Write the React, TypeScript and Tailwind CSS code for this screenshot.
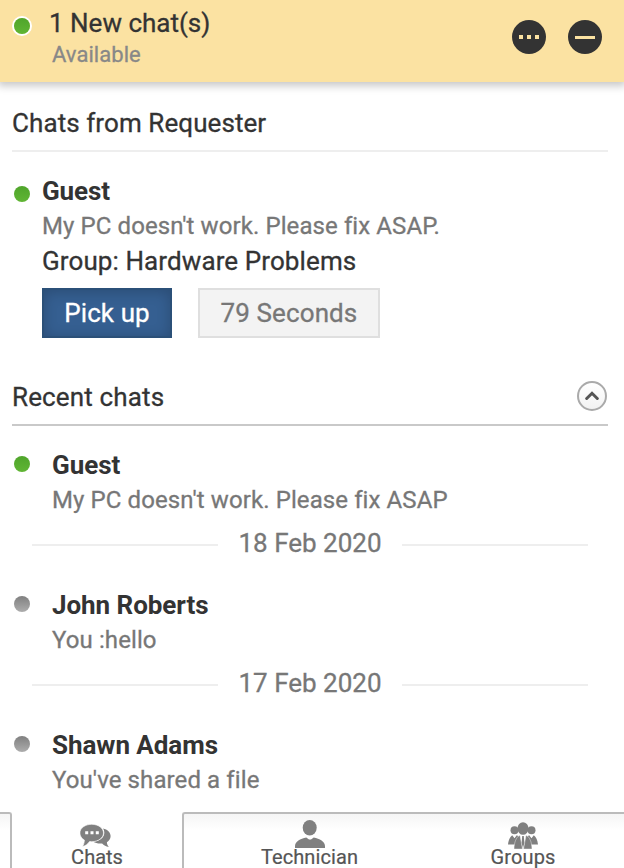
import React from 'react';

interface RecentChat {
  name: string;
  message: string;
  online: boolean;
  date?: string;
}

const recentChats: RecentChat[] = [
  { name: 'Guest', message: "My PC doesn't work. Please fix ASAP", online: true, date: '18 Feb 2020' },
  { name: 'John Roberts', message: 'You :hello', online: false, date: '17 Feb 2020' },
  { name: 'Shawn Adams', message: "You've shared a file", online: false },
];

const StatusDot: React.FC<{ online: boolean }> = ({ online }) => (
  <span
    className={`block size-4 shrink-0 rounded-full bg-linear-to-b ${
      online ? 'from-[#4fa52b] to-[#60b534]' : 'from-[#808080] to-[#adadad]'
    }`}
  />
);

const ChatsIcon = () => (
  <svg width="32" height="24" viewBox="0 0 32 24" fill="#808080">
    <path d="M23 4.500C27.500 5.300 30.600 8.300 30.600 12c0 2.700-1.400 4.800-3.700 6.200 0 1.600.7 3.200 1.900 4.800-2.800-.6-5-1.800-6.700-3.600-3.500.4-6.500-.3-8.800-1.700 6.600-.6 11-4.200 11-8.900 0-1.500-.4-3-1.300-4.300z" />
    <path
      d="M11.700.3C18.300.3 23.500 4.200 23.500 9s-5.200 8.700-11.800 8.700c-.8 0-1.500 0-2.200-.1-1.700 2.500-4 4.200-7 5 1.200-2 1.800-4.200 1.900-6.500C1.600 14.500-.1 11.900-.1 9-.1 4.200 5.100.3 11.700.3z"
      stroke="#fff"
      strokeWidth=".6"
    />
    <path d="M5.200 7.300h3v3h-3zM10.500 7.300h3v3h-3zM15.800 7.300h3v3h-3z" fill="#fff" />
  </svg>
);

const TechnicianIcon = () => (
  <svg width="30" height="28" viewBox="0 0 30 28" fill="#808080">
    <ellipse cx="14.700" cy="7.700" rx="7" ry="7.700" />
    <path d="M0 28v-2c0-4.700 5.300-7.400 11.300-8.600l2.700 2h2l2.700-2C24.700 18.600 30 21.300 30 26v2z" />
  </svg>
);

const GroupsIcon = () => (
  <svg width="30" height="28" viewBox="0 0 30 28" fill="#808080">
    <circle cx="6.500" cy="8.200" r="4" />
    <circle cx="23.500" cy="8.200" r="4" />
    <path d="M0 22.500c.5-4.500 2-7.500 4.200-9.200l2.300 3 2.300-3L10 14l-1.500 8.500z" />
    <path d="M30 22.500c-.5-4.500-2-7.500-4.200-9.200l-2.300 3-2.300-3L20 14l1.500 8.500z" />
    <path d="M6 27c.3-7 2-11.500 5.500-13.500h.5l2.500 13.500zM24 27c-.3-7-2-11.500-5.500-13.500H18L15.500 27z" stroke="#fff" strokeWidth=".4" />
    <path d="M14.200 14h1.600l.6 7L15 26l-1.400-5z" />
    <ellipse cx="15" cy="6.500" rx="5.500" ry="6.300" />
  </svg>
);

const DateDivider: React.FC<{ label: string }> = ({ label }) => (
  <div className="mt-2 mb-[26px] ml-8 mr-9 flex h-9 items-center">
    <span className="mt-1 h-0.5 w-[186px] bg-[#eeeeee]" />
    <span className="flex-1 text-center text-[26px] leading-9 text-[#777]">{label}</span>
    <span className="mt-1 h-0.5 w-[186px] bg-[#eeeeee]" />
  </div>
);

const Header = () => (
  <header className="relative flex h-[82px] shrink-0 bg-[#fbe2a2] pl-3 pr-[22px] shadow-[0_2px_8px_2px_rgba(0,0,0,0.22)]">
    <span className="mt-4 flex size-5 items-center justify-center rounded-full border-2 border-white">
      <StatusDot online />
    </span>
    <div className="ml-[17px] pt-[5px]">
      <h1 className="text-[26px] leading-9 text-[#333]">1 New chat(s)</h1>
      <p className="ml-[3px] text-[22px] leading-7 tracking-[0.05px] text-[#888]">Available</p>
    </div>
    <div className="ml-auto flex gap-[22px] pt-5">
      <button className="flex size-[34px] items-center justify-center gap-1 rounded-full bg-[#333]">
        <span className="size-1 bg-[#fbe2a2]" />
        <span className="size-1 bg-[#fbe2a2]" />
        <span className="size-1 bg-[#fbe2a2]" />
      </button>
      <button className="flex size-[34px] items-center justify-center rounded-full bg-[#333]">
        <span className="h-[3px] w-5 bg-[#fbe2a2]" />
      </button>
    </div>
  </header>
);

const App: React.FC = () => {
  return (
    <div className="flex h-[868px] w-[624px] flex-col overflow-hidden bg-white font-[Roboto,sans-serif] text-[#333] [-webkit-text-stroke:0.3px]">
      <Header />

      {/* Incoming requests */}
      <section className="px-3">
        <div className="mr-1 border-b-2 border-[#eeeeee] pt-[23px] pb-[9px]">
          <h2 className="text-[26px] leading-9 tracking-[0.08px]">Chats from Requester</h2>
        </div>
        <div className="mt-[21px] flex pl-0.5">
          <div className="pt-[13px]">
            <StatusDot online />
          </div>
          <div className="ml-3">
            <h3 className="text-[26px] font-bold leading-9 tracking-[-0.1px] [-webkit-text-stroke:0]">Guest</h3>
            <p className="text-[24px] leading-[34px] tracking-[0.09px] text-[#777]">My PC doesn't work. Please fix ASAP.</p>
            <p className="text-[26px] leading-9 tracking-[0.1px]">Group: Hardware Problems</p>
            <div className="mt-[9px] flex gap-[26px]">
              <button className="h-[50px] w-[130px] border-2 border-[#2b5078] bg-[#355f91] text-[26px] tracking-[0.1px] text-white shadow-[inset_0_2px_14px_rgba(0,0,0,0.2)]">
                Pick up
              </button>
              <button className="h-[50px] w-[182px] border-2 border-[#dfdfdf] bg-[#f3f3f3] text-[26px] tracking-[0.1px] text-[#777]">
                79 Seconds
              </button>
            </div>
          </div>
        </div>
      </section>

      {/* History */}
      <section className="mt-[41px]">
        <div className="ml-3 mr-4 flex justify-between border-b-2 border-[#c9c9c9] pb-[9px]">
          <h2 className="text-[26px] leading-9 tracking-[0.15px]">Recent chats</h2>
          <button className="mt-0.5 mr-px flex size-[30px] items-center justify-center rounded-full border-2 border-[#aaa] bg-linear-to-b from-white to-[#f2f2f2]">
            <svg width="14" height="10" viewBox="0 0 14 10" fill="none" stroke="#555" strokeWidth="3" strokeLinecap="round">
              <path d="M1.700 7.500L7 2.300l5.300 5.200" />
            </svg>
          </button>
        </div>
        <div className="pt-[21px]">
          {recentChats.map((chat) => (
            <React.Fragment key={chat.name}>
              <div className="flex pl-3.5">
                <div className="pt-[9px]">
                  <StatusDot online={chat.online} />
                </div>
                <div className="ml-[22px]">
                  <h3 className="text-[26px] font-bold leading-9 tracking-[-0.05px] [-webkit-text-stroke:0]">{chat.name}</h3>
                  <p className="text-[24px] leading-[34px] tracking-[0.1px] text-[#777]">{chat.message}</p>
                </div>
              </div>
              {chat.date && <DateDivider label={chat.date} />}
            </React.Fragment>
          ))}
        </div>
      </section>

      {/* Bottom tabs */}
      <nav className="mt-[15px] flex h-14 shrink-0 text-[20px] leading-5 text-[#555] [-webkit-text-stroke:0.2px]">
        <div className="w-3 rounded-tr-[3px] border-t-2 border-r-2 border-[#bbb] bg-linear-to-b from-[#f5f5f5] to-white to-30%" />
        <button className="flex w-[170px] flex-col items-center pt-3">
          <span className="mr-[3px] h-6">
            <ChatsIcon />
          </span>
          <span className="-mt-px">Chats</span>
        </button>
        <div className="flex flex-1 rounded-tl-[3px] border-t-2 border-l-2 border-[#bbb] bg-linear-to-b from-[#f5f5f5] to-white to-30%">
          <button className="flex w-[251px] flex-col items-center pt-1.5">
            <TechnicianIcon />
            <span className="-mt-px tracking-[0.1px]">Technician</span>
          </button>
          <button className="flex w-[176px] flex-col items-center pt-2">
            <GroupsIcon />
            <span className="-mt-[3px] tracking-[0.1px]">Groups</span>
          </button>
        </div>
      </nav>
    </div>
  );
};

export default App;
